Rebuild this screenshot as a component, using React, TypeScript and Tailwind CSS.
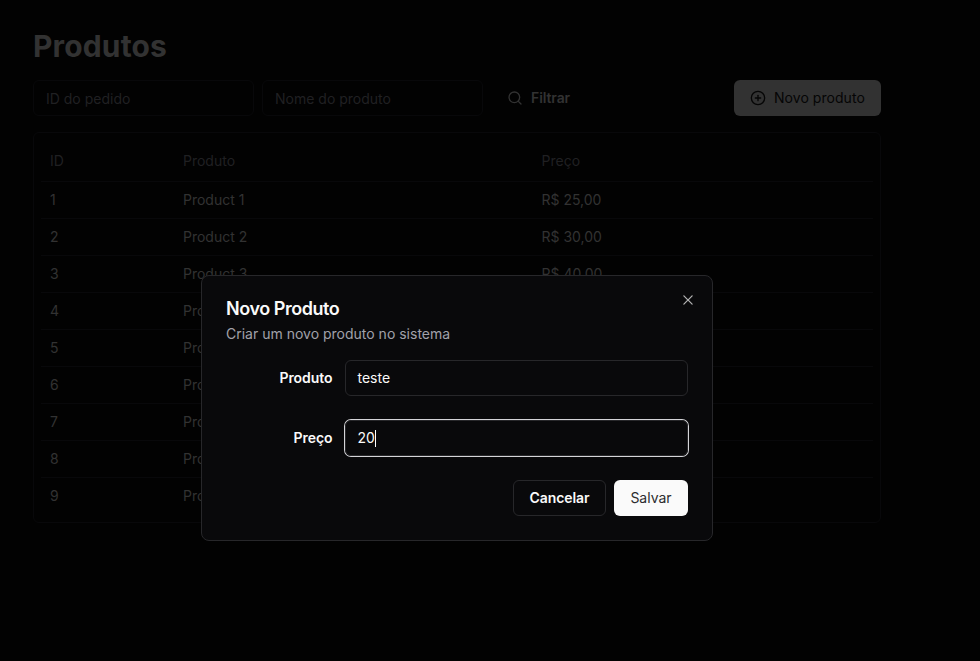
import React from "react";
import { CirclePlus, Search } from "lucide-react";
import { RxCross2 } from "react-icons/rx";

const rows = [
  { id: 1, name: "Product 1", price: "R$ 25,00" },
  { id: 2, name: "Product 2", price: "R$ 30,00" },
  { id: 3, name: "Product 3", price: "R$ 40,00" },
  { id: 4, name: "Product 4", price: "R$ 50,00" },
  { id: 5, name: "Product 5", price: "R$ 60,00" },
  { id: 6, name: "Product 6", price: "R$ 70,00" },
  { id: 7, name: "Product 7", price: "R$ 80,00" },
  { id: 8, name: "Product 8", price: "R$ 90,00" },
  { id: 9, name: "Product 9", price: "R$ 99,00" },
];

function Page() {
  return (
    <div className="w-[914px] pl-[33px] pt-7 text-sm">
      <div className="w-[848px]">
        <h1 className="text-3xl font-bold leading-9 tracking-[0.15px] text-[#323232]">Produtos</h1>
        <div className="mt-4 flex items-center justify-between">
          <div className="flex items-center gap-2">
            <div className="flex h-9 w-[221px] items-center rounded-md border border-[#08080a] px-3 pt-0.5 text-[#202022]">ID do pedido</div>
            <div className="flex h-9 w-[221px] items-center rounded-md border border-[#08080a] px-3 pt-0.5 text-[#202022]">Nome do produto</div>
            <button className="flex h-9 items-center px-4 font-semibold tracking-[-0.1px] text-[#323232]">
              <Search className="mr-2 h-4 w-4" />
              Filtrar
            </button>
          </div>
          <button className="flex h-9 w-[147px] items-center whitespace-nowrap rounded-md bg-[#323232] px-4 tracking-[0.05px] text-[#050505]">
            <CirclePlus className="mr-2 h-4 w-4 shrink-0" />
            Novo produto
          </button>
        </div>
        <div className="mt-4 h-[391px] rounded-md border border-[#08080a] px-[7px] pt-2">
          <div className="grid h-[41px] grid-cols-[133px_358.5px_1fr] items-center border-b border-[#08080a] pl-[9px] text-[#202022]">
            <span>ID</span><span>Produto</span><span>Preço</span>
          </div>
          {rows.map((r) => (
            <div key={r.id} className="grid h-[37px] grid-cols-[133px_358.5px_1fr] items-center border-b border-[#08080a] pl-[9px] text-[#323232] last:border-transparent">
              <span>{r.id}</span><span>{r.name}</span><span>{r.price}</span>
            </div>
          ))}
        </div>
      </div>
    </div>
  );
}

function Dialog() {
  return (
    <div role="dialog" className="absolute left-[201px] top-[275px] h-[266px] w-[512px] rounded-lg border border-[#27272a] bg-[#09090b] p-6 text-sm text-[#fafafa]">
      <RxCross2 className="absolute right-4 top-4 h-4 w-4 text-[#b3b3b4]" />
      <h2 className="text-lg font-semibold leading-[18px] tracking-tight">Novo Produto</h2>
      <p className="mt-1.5 leading-5 text-[#a1a1aa]">Criar um novo produto no sistema</p>
      <div className="mt-4 flex items-center justify-between">
        <label className="w-[106.5px] text-right font-semibold tracking-[-0.05px]">Produto</label>
        <div className="flex h-9 w-[343px] items-center rounded-md border border-[#27272a] px-[11.5px]">teste</div>
      </div>
      <div className="mt-6 flex items-center justify-between">
        <label className="w-[106.5px] text-right font-semibold tracking-[-0.05px]">Preço</label>
        <div className="flex h-9 w-[343px] items-center rounded-md border border-[#27272a] px-[11.5px] ring-1 ring-[#d4d4d8]">
          20<span className="h-[17px] w-px bg-white" />
        </div>
      </div>
      <div className="mt-6 flex justify-end gap-2">
        <button className="h-9 w-[93px] rounded-md border border-[#27272a] text-center font-semibold tracking-[-0.05px]">Cancelar</button>
        <button className="h-9 w-[74px] rounded-md bg-[#fafafa] text-center text-[#2c2c2f]">Salvar</button>
      </div>
    </div>
  );
}

export default function App() {
  return (
    <div className="relative h-[661px] w-[980px] overflow-hidden bg-[#020202] font-['Inter',sans-serif]">
      <Page />
      <Dialog />
    </div>
  );
}
